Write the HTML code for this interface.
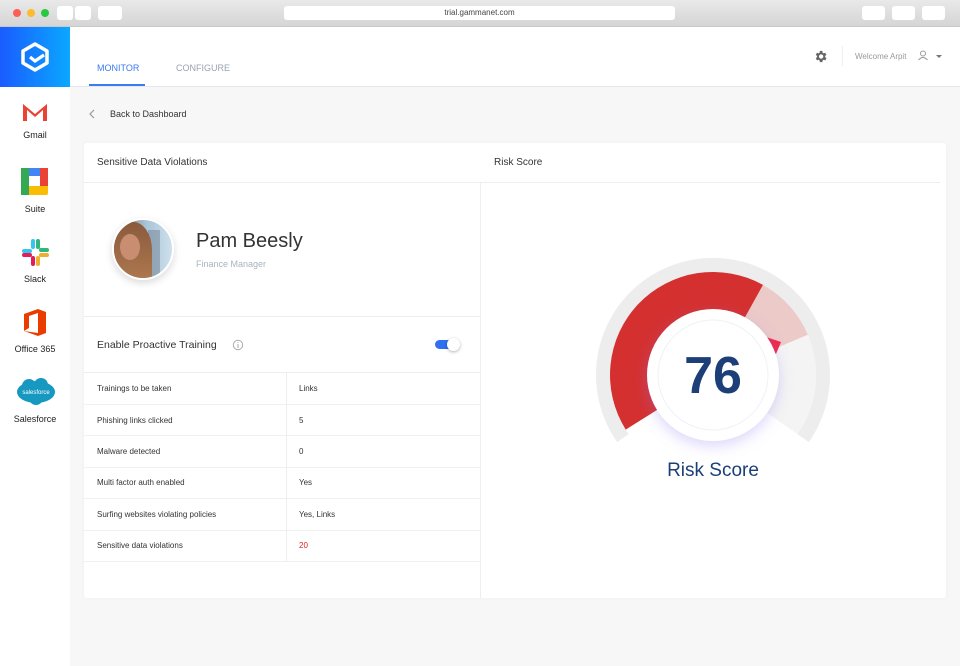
<!DOCTYPE html>
<html><head><style>
*{margin:0;padding:0;box-sizing:border-box}
body{width:960px;height:666px;overflow:hidden;font-family:"Liberation Sans",Arial,sans-serif;background:#f7f7f8;position:relative}
.abs{position:absolute}
.top{left:0;top:0;width:960px;height:27px;background:linear-gradient(#e9e9e9,#d5d5d5);border-bottom:1px solid #c9c9c9}
.dot{top:9px;width:8px;height:8px;border-radius:50%}
.btn{top:6px;height:14px;background:#fff;border-radius:3px}
.side{left:0;top:27px;width:70px;height:639px;background:#fff}
.logo{left:0;top:27px;width:70px;height:60px;background:linear-gradient(90deg,#1a5cff,#0aa8ff)}
.app{left:0;width:70px;text-align:center;font-size:9px;color:#222}
.hdr{left:70px;top:27px;width:890px;height:60px;background:#fff;border-bottom:1px solid #e6e8ec}
.card{left:84px;top:143px;width:862px;height:455px;background:#fff;border-radius:3px;box-shadow:0 0 4px rgba(0,0,0,.04)}
.t{font-size:8px;color:#333}
.row{left:84px;width:396px;height:31.5px;border-bottom:1px solid #eef0f2}
</style></head><body>
<div class="abs top"></div>
<div class="abs dot" style="left:13px;background:#fc5f57"></div>
<div class="abs dot" style="left:27px;background:#fdbb2e"></div>
<div class="abs dot" style="left:41px;background:#28c840"></div>
<div class="abs btn" style="left:57px;width:16px"></div>
<div class="abs btn" style="left:75px;width:16px"></div>
<div class="abs btn" style="left:98px;width:24px"></div>
<div class="abs btn" style="left:284px;width:391px;font-size:8px;color:#444;text-align:center;line-height:14px">trial.gammanet.com</div>
<div class="abs btn" style="left:862px;width:23px"></div>
<div class="abs btn" style="left:892px;width:23px"></div>
<div class="abs btn" style="left:922px;width:23px"></div>

<div class="abs side"></div>
<div class="abs logo"><svg width="70" height="60"><path d="M35 17 L47 24 L47 36 L35 43 L23 36 L23 24 Z" fill="none" stroke="#fff" stroke-width="3.5" stroke-linejoin="round"/><path d="M30 30 L35 34 L44 28" fill="none" stroke="#fff" stroke-width="3.2"/></svg></div>
<svg class="abs" style="left:22px;top:102px" width="27" height="20"><path d="M1 2 L13 12 L25 2 L25 19 L21 19 L21 8 L13 15 L5 8 L5 19 L1 19Z" fill="#ea4335"/></svg>
<div class="abs app" style="top:130px">Gmail</div>
<svg class="abs" style="left:21px;top:168px" width="27" height="27"><rect width="27" height="27" rx="2" fill="#fbbc04"/><rect width="27" height="8" fill="#4285f4"/><rect width="8" height="27" fill="#34a853"/><rect x="19" y="0" width="8" height="18" fill="#ea4335"/><rect x="8" y="8" width="11" height="10" fill="#fff"/></svg>
<div class="abs app" style="top:204px">Suite</div>
<svg class="abs" style="left:22px;top:239px" width="27" height="27"><rect x="0" y="10" width="10" height="4" rx="2" fill="#36c5f0"/><rect x="9" y="0" width="4" height="10" rx="2" fill="#36c5f0"/><rect x="14" y="0" width="4" height="10" rx="2" fill="#2eb67d"/><rect x="17" y="9" width="10" height="4" rx="2" fill="#2eb67d"/><rect x="17" y="14" width="10" height="4" rx="2" fill="#ecb22e"/><rect x="14" y="17" width="4" height="10" rx="2" fill="#ecb22e"/><rect x="9" y="17" width="4" height="10" rx="2" fill="#e01e5a"/><rect x="0" y="14" width="10" height="4" rx="2" fill="#e01e5a"/></svg>
<div class="abs app" style="top:274px">Slack</div>
<svg class="abs" style="left:24px;top:309px" width="22" height="27"><path d="M0 5 L14 0 L22 3 L22 24 L14 27 L0 22 L14 24 L14 4 L5 7 L5 19 L0 22Z" fill="#eb3c00"/></svg>
<div class="abs app" style="top:344px">Office 365</div>
<svg class="abs" style="left:16px;top:378px" width="40" height="28"><ellipse cx="20" cy="14" rx="19" ry="11" fill="#1798c1"/><circle cx="13" cy="8" r="7" fill="#1798c1"/><circle cx="25" cy="7" r="7" fill="#1798c1"/><circle cx="20" cy="20" r="7" fill="#1798c1"/><text x="20" y="16" font-size="6" fill="#fff" text-anchor="middle" font-family="Liberation Sans">salesforce</text></svg>
<div class="abs app" style="top:414px">Salesforce</div>

<div class="abs hdr"></div>
<div class="abs" style="left:97px;top:63px;font-size:9px;color:#3b7cf0">MONITOR</div>
<div class="abs" style="left:89px;top:84px;width:56px;height:2px;background:#3b7cf0"></div>
<div class="abs" style="left:176px;top:63px;font-size:9px;color:#9aa2b0">CONFIGURE</div>
<svg class="abs" style="left:813px;top:49px" width="15" height="15" viewBox="0 0 24 24"><path fill="#666" d="M19.4 13a7.5 7.5 0 0 0 0-2l2.1-1.6-2-3.5-2.5 1a7 7 0 0 0-1.7-1L15 3h-4l-.4 2.9a7 7 0 0 0-1.7 1l-2.5-1-2 3.5L6.5 11a7.5 7.5 0 0 0 0 2l-2.1 1.6 2 3.5 2.5-1a7 7 0 0 0 1.7 1L11 21h4l.4-2.9a7 7 0 0 0 1.7-1l2.5 1 2-3.5zM13 15.5a3.5 3.5 0 1 1 0-7 3.5 3.5 0 0 1 0 7z"/></svg>
<div class="abs" style="left:842px;top:46px;width:1px;height:20px;background:#eee"></div>
<div class="abs" style="left:855px;top:52px;font-size:8px;color:#999">Welcome Arpit</div>
<svg class="abs" style="left:917px;top:50px" width="30" height="12"><circle cx="6" cy="3.5" r="2.5" fill="none" stroke="#999" stroke-width="1"/><path d="M1.5 10 Q6 5 10.5 10" fill="none" stroke="#999" stroke-width="1"/><path d="M19 5 L25 5 L22 8Z" fill="#777"/></svg>

<svg class="abs" style="left:88px;top:109px" width="8" height="10"><path d="M6 1 L2 5 L6 9" fill="none" stroke="#999" stroke-width="1.2"/></svg>
<div class="abs" style="left:110px;top:109px;font-size:9px;color:#333">Back to Dashboard</div>

<div class="abs card"></div>
<div class="abs" style="left:97px;top:157px;font-size:10px;color:#333">Sensitive Data Violations</div>
<div class="abs" style="left:494px;top:157px;font-size:10px;color:#333">Risk Score</div>
<div class="abs" style="left:84px;top:182px;width:856px;height:1px;background:#eceef0"></div>
<div class="abs" style="left:480px;top:183px;width:1px;height:415px;background:#eceef0"></div>

<div class="abs" style="left:112px;top:218px;width:62px;height:62px;border-radius:50%;border:2px solid #fff;box-shadow:0 3px 8px rgba(0,0,0,.15);overflow:hidden;background:linear-gradient(90deg,#7a5a48 0,#a7c4d8 55%,#cfe0ec 100%)">
<div class="abs" style="left:22px;top:10px;width:12px;height:48px;background:#6f7f90;opacity:.5;left:34px"></div>
<div class="abs" style="left:-4px;top:2px;width:42px;height:62px;border-radius:45% 45% 10% 10%;background:linear-gradient(#8a5a3c,#b07a50)"></div>
<div class="abs" style="left:6px;top:14px;width:20px;height:26px;border-radius:50%;background:#c98e72"></div>
</div>
<div class="abs" style="left:196px;top:230px;font-size:20px;color:#333">Pam Beesly</div>
<div class="abs" style="left:196px;top:259px;font-size:9px;color:#aab3c0">Finance Manager</div>
<div class="abs" style="left:84px;top:316px;width:396px;height:1px;background:#eceef0"></div>
<div class="abs" style="left:97px;top:339px;font-size:10.5px;color:#333">Enable Proactive Training</div>
<svg class="abs" style="left:232px;top:339px" width="12" height="12"><circle cx="6" cy="6" r="4.7" fill="none" stroke="#aaa" stroke-width="1"/><path d="M6 5 V9 M6 3.2 V4" stroke="#aaa" stroke-width="1"/></svg>
<div class="abs" style="left:435px;top:340px;width:20px;height:9px;border-radius:5px;background:#2f6ff0"></div>
<div class="abs" style="left:447px;top:338px;width:13px;height:13px;border-radius:50%;background:#fff;box-shadow:0 1px 3px rgba(0,0,0,.3)"></div>
<div class="abs" style="left:84px;top:372px;width:396px;height:1px;background:#eceef0"></div>

<div class="abs row" style="top:373px"></div><div class="abs t" style="left:97px;top:384px">Trainings to be taken</div><div class="abs t" style="left:299px;top:384px">Links</div>
<div class="abs row" style="top:404.5px"></div><div class="abs t" style="left:97px;top:416px">Phishing links clicked</div><div class="abs t" style="left:299px;top:416px">5</div>
<div class="abs row" style="top:436px"></div><div class="abs t" style="left:97px;top:447px">Malware detected</div><div class="abs t" style="left:299px;top:447px">0</div>
<div class="abs row" style="top:467.5px"></div><div class="abs t" style="left:97px;top:478px">Multi factor auth enabled</div><div class="abs t" style="left:299px;top:478px">Yes</div>
<div class="abs row" style="top:499px"></div><div class="abs t" style="left:97px;top:510px">Surfing websites violating policies</div><div class="abs t" style="left:299px;top:510px">Yes, Links</div>
<div class="abs row" style="top:530.5px"></div><div class="abs t" style="left:97px;top:541px">Sensitive data violations</div><div class="abs t" style="left:299px;top:541px;color:#e02020">20</div>
<div class="abs" style="left:286px;top:373px;width:1px;height:189px;background:#eceef0"></div>

<svg class="abs" style="left:580px;top:250px" width="260" height="240">
<defs><filter id="sh" x="-50%" y="-50%" width="200%" height="200%"><feDropShadow dx="0" dy="5" stdDeviation="7" flood-color="#8a7cf0" flood-opacity=".3"/></filter></defs>
<path d="M37.2 192.1 A117 117 0 1 1 228.8 192.1 L217.4 184.1 A103 103 0 1 0 48.6 184.1 Z" fill="#ededed"/>
<path d="M133 125 L227.8 84.7 A103 103 0 0 1 217.4 184.1 Z" fill="#f4f4f4"/>
<path d="M133 125 L183 34.9 A103 103 0 0 1 227.8 84.7 Z" fill="#eccac8"/>
<path d="M133 125 L45.7 179.6 A103 103 0 0 1 183 34.9 Z" fill="#d43030"/>
<path d="M180 85 L201 92 L196 104Z" fill="#f0284a"/>
<circle cx="133" cy="125" r="66" fill="#fff" filter="url(#sh)"/>
<circle cx="133" cy="125" r="55" fill="none" stroke="#eef2f8" stroke-width="1"/>
<text x="133" y="143" font-size="52" font-weight="bold" fill="#1c3f78" text-anchor="middle" font-family="Liberation Sans">76</text>
<text x="133" y="226" font-size="19" fill="#1c3f78" text-anchor="middle" font-family="Liberation Sans">Risk Score</text>
</svg>
</body></html>
